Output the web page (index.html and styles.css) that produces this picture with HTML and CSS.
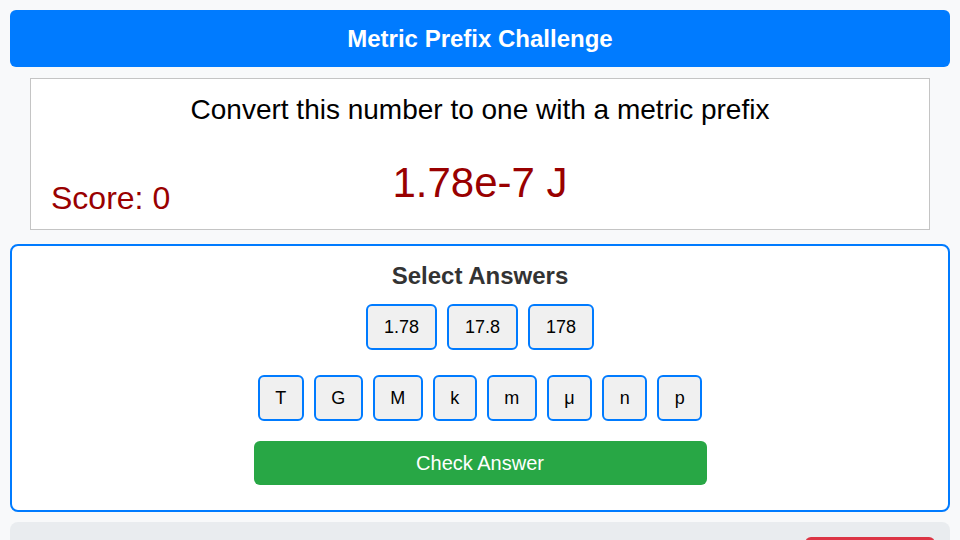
FILE: index.html
```html
<!DOCTYPE html>
<html lang="en">
<head>
<meta charset="utf-8">
<title>Metric Prefix Challenge</title>
<link rel="stylesheet" href="styles.css">
</head>
<body>
<header class="header">Metric Prefix Challenge</header>
<section class="question">
  <div class="prompt">Convert this number to one with a metric prefix</div>
  <div class="question-row">
    <div class="score">Score: 0</div>
    <div class="number">1.78e-7 J</div>
    <div></div>
  </div>
</section>
<section class="answers">
  <h2 class="answers-title">Select Answers</h2>
  <div class="btn-row">
    <button class="opt">1.78</button>
    <button class="opt">17.8</button>
    <button class="opt">178</button>
  </div>
  <div class="btn-row prefixes">
    <button class="opt">T</button>
    <button class="opt">G</button>
    <button class="opt">M</button>
    <button class="opt">k</button>
    <button class="opt">m</button>
    <button class="opt">μ</button>
    <button class="opt">n</button>
    <button class="opt">p</button>
  </div>
  <button class="check">Check Answer</button>
</section>
<section class="footer-panel">
  <button class="reset">Reset</button>
</section>
</body>
</html>
```
FILE: styles.css
```css
* { box-sizing: border-box; }
html, body { margin: 0; }
body {
  padding: 10px;
  background: #f8f9fa;
  font-family: "Liberation Sans", Arial, sans-serif;
  color: #000;
}
.header {
  background: #007bff;
  color: #fff;
  font-weight: bold;
  font-size: 24px;
  text-align: center;
  border-radius: 6px;
  height: 57px;
  display: flex;
  align-items: center;
  justify-content: center;
}
.question {
  margin: 11px 20px 0;
  background: #fff;
  border: 1px solid #c4c4c4;
  height: 152px;
  padding-top: 15px;
}
.prompt {
  text-align: center;
  font-size: 28px;
  line-height: 32px;
}
.question-row {
  display: grid;
  grid-template-columns: 1fr auto 1fr;
  align-items: end;
  margin-top: 32px;
}
.score {
  color: #990000;
  font-size: 32px;
  padding-left: 20px;
  line-height: 32px;
}
.number {
  color: #990000;
  font-size: 42px;
  line-height: 50px;
  padding-bottom: 6px;
}
.answers {
  margin-top: 14px;
  background: #fff;
  border: 2px solid #007bff;
  border-radius: 8px;
  height: 268px;
  display: flex;
  flex-direction: column;
  align-items: center;
  padding-top: 16px;
}
.answers-title {
  margin: 0;
  font-size: 24px;
  line-height: 28px;
  color: #333;
}
.btn-row {
  display: flex;
  gap: 10px;
  margin-top: 14px;
}
.prefixes { margin-top: 25px; }
.opt {
  font-family: "Liberation Sans", Arial, sans-serif;
  font-size: 18px;
  height: 46px;
  padding: 0 16px;
  border: 2px solid #007bff;
  border-radius: 6px;
  background: #f0f0f0;
  color: #000;
}
.prefixes .opt { padding: 0 15.5px; }
.check {
  margin-top: 20px;
  width: 453px;
  height: 44px;
  background: #28a745;
  color: #fff;
  border: none;
  border-radius: 6px;
  font-family: "Liberation Sans", Arial, sans-serif;
  font-size: 20px;
}
.footer-panel {
  margin-top: 10px;
  background: #e9ecef;
  border-radius: 8px;
  height: 80px;
  padding: 15px;
  display: flex;
  justify-content: flex-end;
}
.reset {
  width: 130px;
  height: 40px;
  background: #dc3545;
  color: #fff;
  border: none;
  border-radius: 6px;
  font-size: 18px;
}
```
